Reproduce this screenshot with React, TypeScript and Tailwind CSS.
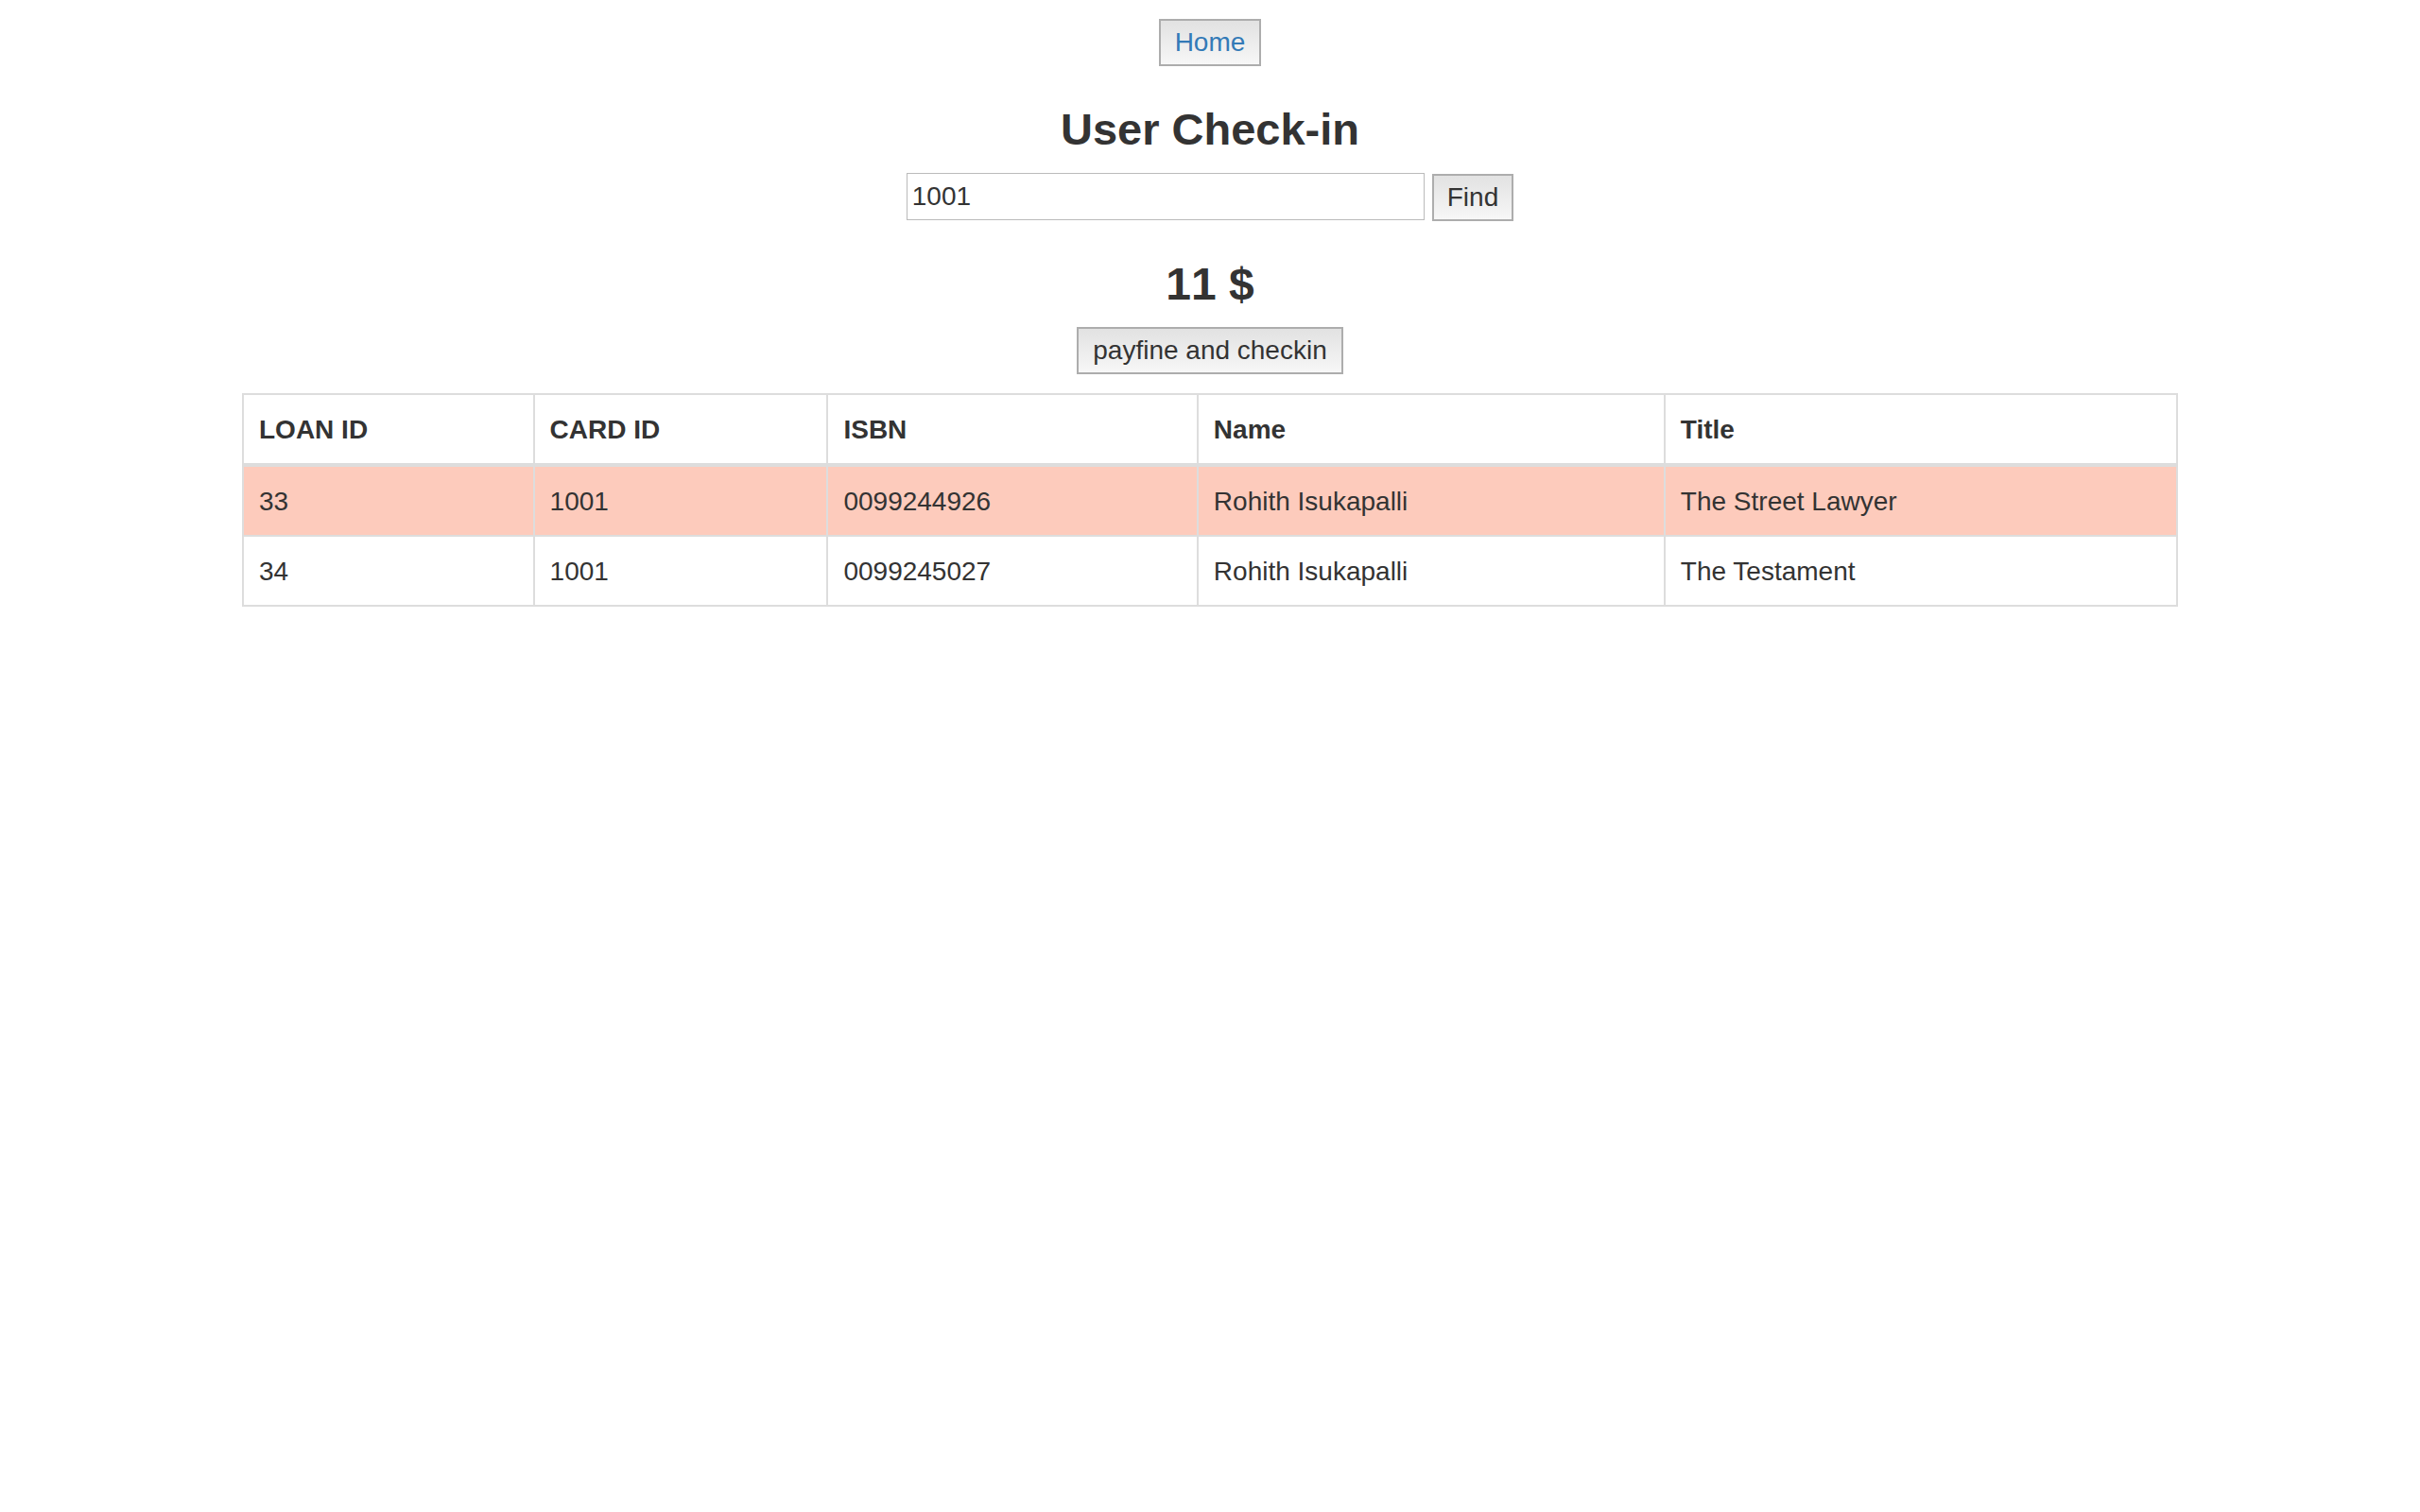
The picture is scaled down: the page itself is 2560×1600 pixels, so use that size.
import React, { useState } from "react";

const loans = [
  { id: "33", card: "1001", isbn: "0099244926", name: "Rohith Isukapalli", title: "The Street Lawyer", fine: true },
  { id: "34", card: "1001", isbn: "0099245027", name: "Rohith Isukapalli", title: "The Testament", fine: false },
];

const columns = ["LOAN ID", "CARD ID", "ISBN", "Name", "Title"];

const buttonClass =
  "h-[50px] border-2 border-[#adadad] bg-linear-to-b from-[#e2e2e2] to-[#f7f7f7] leading-[46px]";

const cellClass = "border-2 border-[#dddddd] px-4 pt-[17px] pb-[15px] text-left";

export default function App() {
  const [query, setQuery] = useState("1001");

  return (
    <main className="flex min-h-screen flex-col items-center bg-white pt-5 font-['Liberation_Sans',Arial,sans-serif] text-[28px] leading-[40px] text-[#333333]">
      <a href="#" className={buttonClass + " px-[15px] text-[#337ab7]"}>
        Home
      </a>

      <h1 className="mt-10 text-[47px] leading-[54px] font-bold">User Check-in</h1>

      <form className="mt-[19px] flex items-end gap-2" onSubmit={(e) => e.preventDefault()}>
        <input
          type="text"
          aria-label="Card ID"
          value={query}
          onChange={(e) => setQuery(e.target.value)}
          className="mb-px h-[50px] w-[548px] border border-[#bbbbbb] bg-white px-[5px] outline-none"
        />
        <button type="submit" className={buttonClass + " px-[14px]"}>
          Find
        </button>
      </form>

      <h2 className="mt-10 text-[48px] leading-[54px] font-bold [font-kerning:none]">11 $</h2>

      <button type="button" className={buttonClass + " mt-[18px] px-[15px]"}>
        payfine and checkin
      </button>

      <table className="mt-5 w-4/5 border-collapse">
        <thead>
          <tr>
            {columns.map((c) => (
              <th key={c} scope="col" className={cellClass + " border-b-4 font-bold"}>
                {c}
              </th>
            ))}
          </tr>
        </thead>
        <tbody>
          {loans.map((l) => (
            <tr key={l.id} className={l.fine ? "bg-[#fdcbbc]" : "bg-white"}>
              <td className={cellClass}>{l.id}</td>
              <td className={cellClass}>{l.card}</td>
              <td className={cellClass}>{l.isbn}</td>
              <td className={cellClass}>{l.name}</td>
              <td className={cellClass}>{l.title}</td>
            </tr>
          ))}
        </tbody>
      </table>
    </main>
  );
}
